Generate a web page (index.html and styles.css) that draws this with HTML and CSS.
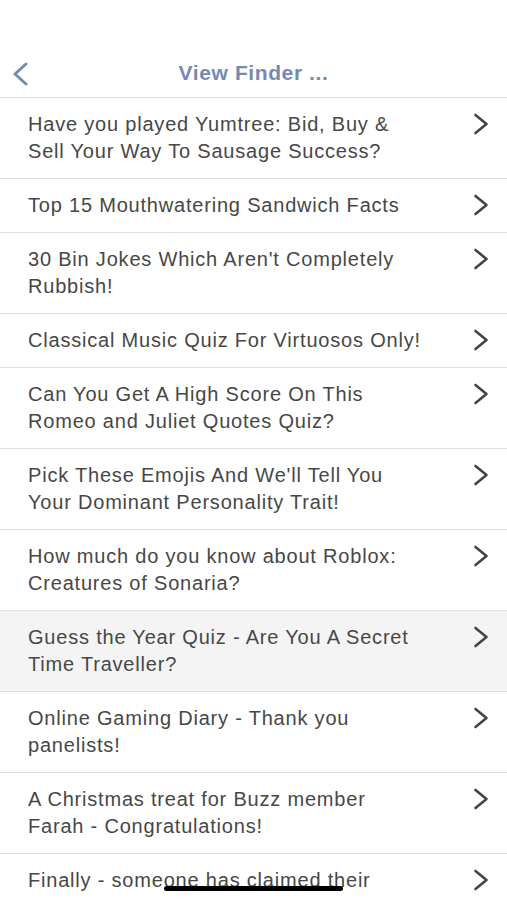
FILE: index.html
```html
<!DOCTYPE html>
<html lang="en">
<head>
<meta charset="utf-8">
<title>View Finder</title>
<link rel="stylesheet" href="styles.css">
</head>
<body>
<div class="screen">
  <header class="nav">
    <svg class="back" width="16" height="24" viewBox="0 0 16 24"><path d="M14 2 L3 12 L14 22" fill="none" stroke="#7589b4" stroke-width="3" stroke-linecap="round" stroke-linejoin="round"/></svg>
    <h1 class="title">View Finder ...</h1>
    <span></span>
  </header>
  <ul class="list">
    <li class="row"><span class="label">Have you played Yumtree: Bid, Buy &amp; Sell Your Way To Sausage Success?</span><svg class="chev" width="16" height="22" viewBox="0 0 16 22"><path d="M2.5 2 L13.5 11 L2.5 20" fill="none" stroke="#444" stroke-width="2.6" stroke-linecap="round" stroke-linejoin="round"/></svg></li>
    <li class="row"><span class="label">Top 15 Mouthwatering Sandwich Facts</span><svg class="chev" width="16" height="22" viewBox="0 0 16 22"><path d="M2.5 2 L13.5 11 L2.5 20" fill="none" stroke="#444" stroke-width="2.6" stroke-linecap="round" stroke-linejoin="round"/></svg></li>
    <li class="row"><span class="label">30 Bin Jokes Which Aren't Completely Rubbish!</span><svg class="chev" width="16" height="22" viewBox="0 0 16 22"><path d="M2.5 2 L13.5 11 L2.5 20" fill="none" stroke="#444" stroke-width="2.6" stroke-linecap="round" stroke-linejoin="round"/></svg></li>
    <li class="row"><span class="label">Classical Music Quiz For Virtuosos Only!</span><svg class="chev" width="16" height="22" viewBox="0 0 16 22"><path d="M2.5 2 L13.5 11 L2.5 20" fill="none" stroke="#444" stroke-width="2.6" stroke-linecap="round" stroke-linejoin="round"/></svg></li>
    <li class="row"><span class="label">Can You Get A High Score On This Romeo and Juliet Quotes Quiz?</span><svg class="chev" width="16" height="22" viewBox="0 0 16 22"><path d="M2.5 2 L13.5 11 L2.5 20" fill="none" stroke="#444" stroke-width="2.6" stroke-linecap="round" stroke-linejoin="round"/></svg></li>
    <li class="row"><span class="label">Pick These Emojis And We'll Tell You Your Dominant Personality Trait!</span><svg class="chev" width="16" height="22" viewBox="0 0 16 22"><path d="M2.5 2 L13.5 11 L2.5 20" fill="none" stroke="#444" stroke-width="2.6" stroke-linecap="round" stroke-linejoin="round"/></svg></li>
    <li class="row"><span class="label">How much do you know about Roblox: Creatures of Sonaria?</span><svg class="chev" width="16" height="22" viewBox="0 0 16 22"><path d="M2.5 2 L13.5 11 L2.5 20" fill="none" stroke="#444" stroke-width="2.6" stroke-linecap="round" stroke-linejoin="round"/></svg></li>
    <li class="row row-active"><span class="label">Guess the Year Quiz - Are You A Secret Time Traveller?</span><svg class="chev" width="16" height="22" viewBox="0 0 16 22"><path d="M2.5 2 L13.5 11 L2.5 20" fill="none" stroke="#444" stroke-width="2.6" stroke-linecap="round" stroke-linejoin="round"/></svg></li>
    <li class="row"><span class="label">Online Gaming Diary - Thank you panelists!</span><svg class="chev" width="16" height="22" viewBox="0 0 16 22"><path d="M2.5 2 L13.5 11 L2.5 20" fill="none" stroke="#444" stroke-width="2.6" stroke-linecap="round" stroke-linejoin="round"/></svg></li>
    <li class="row"><span class="label">A Christmas treat for Buzz member Farah - Congratulations!</span><svg class="chev" width="16" height="22" viewBox="0 0 16 22"><path d="M2.5 2 L13.5 11 L2.5 20" fill="none" stroke="#444" stroke-width="2.6" stroke-linecap="round" stroke-linejoin="round"/></svg></li>
    <li class="row"><span class="label">Finally - someone has claimed their</span><svg class="chev" width="16" height="22" viewBox="0 0 16 22"><path d="M2.5 2 L13.5 11 L2.5 20" fill="none" stroke="#444" stroke-width="2.6" stroke-linecap="round" stroke-linejoin="round"/></svg></li>
  </ul>
  <div class="home-indicator"></div>
</div>
</body>
</html>
```

FILE: styles.css
```css
* { box-sizing: border-box; }
html, body {
  margin: 0;
  padding: 0;
  background: #fff;
}
body {
  font-family: "Liberation Sans", Arial, sans-serif;
}
.screen {
  width: 507px;
  height: 900px;
  overflow: hidden;
  position: relative;
  background: #fff;
}
.nav {
  height: 98px;
  display: grid;
  grid-template-columns: 60px 1fr 60px;
  align-items: start;
  border-bottom: 1px solid #dedede;
}
.back {
  margin: 62px 0 0 12px;
  display: block;
}
.title {
  margin: 61px 0 0;
  font-size: 21px;
  line-height: 24px;
  font-weight: 700;
  letter-spacing: 0.6px;
  color: #7589b4;
  text-align: center;
}
.list {
  list-style: none;
  margin: 0;
  padding: 0;
}
.row {
  display: flex;
  align-items: flex-start;
  gap: 52px;
  padding: 13px 18px 13px 28px;
  border-bottom: 1px solid #dedede;
  background: #fff;
}
.row-active {
  background: #f4f4f4;
}
.label {
  flex: 1;
  font-size: 20px;
  line-height: 27px;
  letter-spacing: 0.8px;
  color: #474747;
}
.chev {
  flex: none;
  margin-top: 2px;
  display: block;
}
.home-indicator {
  position: absolute;
  left: 164px;
  top: 886px;
  width: 179px;
  height: 5px;
  border-radius: 3px;
  background: #000;
}
```
